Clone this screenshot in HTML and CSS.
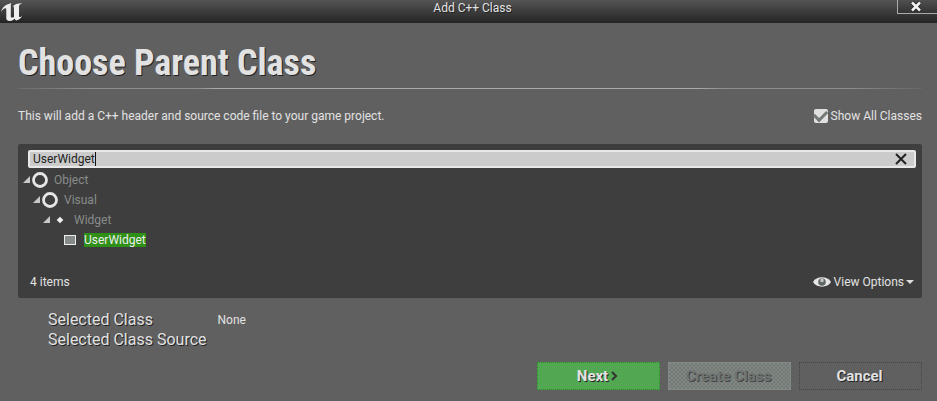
FILE: index.html
```html
<!DOCTYPE html>
<html lang="en">
<head>
<meta charset="utf-8">
<title>Add C++ Class</title>
<link rel="stylesheet" href="styles.css">
</head>
<body>
<div class="dialog">
  <header class="titlebar">
    <svg class="logo" viewBox="0 0 24 22" aria-hidden="true"><path d="M1 12C2.200 7.500 5 4.500 11.500 3C10.800 4 10.800 4.500 10.800 5.500V16C10.800 17.600 12 18 14 17V8.500C14 6.500 13.500 6 12.500 6.500C14.200 4.500 17.500 3.300 22.500 3C20.200 4 19 5 19 6.500V16.500C19.500 17.600 20.800 17 22.300 15.500C21 18.500 18.500 20 16 20.500L14.500 18.800C13 20.300 11.500 21 9.800 21C7.200 21 6 19.500 6.300 17.500V9.500C6.300 7.200 3.500 8 1 12Z"/></svg>
    <div class="title">Add C++ Class</div>
    <button class="close" aria-label="Close"><svg viewBox="0 0 12 11"><path class="x-edge" d="M2 1.500L10 9.500M10 1.500L2 9.500"/><path class="x-fill" d="M2 1.500L10 9.500M10 1.500L2 9.500"/></svg></button>
  </header>
  <main class="content">
    <h1>Choose Parent Class</h1>
    <div class="intro">
      <p>This will add a C++ header and source code file to your game project.</p>
      <label class="check"><input type="checkbox" checked>Show All Classes</label>
    </div>
    <section class="picker">
      <div class="search">
        <input type="text" value="UserWidget" aria-label="Search classes">
        <span class="caret"></span>
        <button class="clear" aria-label="Clear search"><svg viewBox="0 0 12 12"><path d="M1 1L11 11M11 1L1 11"/></svg></button>
      </div>
      <ul class="tree">
        <li><svg class="arrow" viewBox="0 0 8 8"><path d="M7 0V7H0Z"/></svg><svg class="icon" viewBox="0 0 16 16"><circle class="ring" cx="8" cy="8" r="6.500"/></svg><span>Object</span>
          <ul>
            <li><svg class="arrow" viewBox="0 0 8 8"><path d="M7 0V7H0Z"/></svg><svg class="icon" viewBox="0 0 16 16"><circle class="ring" cx="8" cy="8" r="6.500"/></svg><span>Visual</span>
              <ul>
                <li><svg class="arrow" viewBox="0 0 8 8"><path d="M7 0V7H0Z"/></svg><svg class="icon" viewBox="0 0 16 16"><path class="dot" d="M8 4.700L11.300 8L8 11.300L4.700 8Z"/></svg><span>Widget</span>
                  <ul>
                    <li><svg class="arrow" viewBox="0 0 8 8"></svg><svg class="icon" viewBox="0 0 16 16"><rect class="box" x="2.500" y="3.500" width="11" height="9"/></svg><span class="match">UserWidget</span></li>
                  </ul>
                </li>
              </ul>
            </li>
          </ul>
        </li>
      </ul>
      <div class="status">
        <span>4 items</span>
        <button class="view"><svg class="eye" viewBox="0 0 18 10"><path class="lid" d="M0 5C3-1.200 15-1.200 18 5C15 11.200 3 11.200 0 5Z"/><circle class="iris" cx="9" cy="5" r="3.800"/><path class="glint" d="M7.500 1.500H10.500V5H7.500Z"/></svg>View Options<svg class="down" viewBox="0 0 8 4"><path d="M0 0H8L4 4Z"/></svg></button>
      </div>
    </section>
    <dl class="selected">
      <dt>Selected Class</dt><dd>None</dd>
      <dt>Selected Class Source</dt><dd></dd>
    </dl>
    <footer class="actions">
      <button class="btn next">Next<svg viewBox="0 0 7 10"><path d="M1 1L5 5L1 9"/></svg></button>
      <button class="btn create" disabled>Create Class</button>
      <button class="btn cancel">Cancel</button>
    </footer>
  </main>
</div>
</body>
</html>
```
FILE: styles.css
```css
* { box-sizing: border-box; }
body {
  margin: 0;
  min-height: 100vh;
  background: #606060;
  color: #e2e2e2;
  font: 12px/20px Roboto, "Liberation Sans", sans-serif;
}
button, input { font: inherit; color: inherit; }
button { padding: 0; border: 0; background: none; }
svg { display: block; flex: none; }
p, h1, ul, dl, dd { margin: 0; padding: 0; }
.titlebar {
  display: grid;
  grid-template-columns: 1fr auto 1fr;
  align-items: start;
  height: 23px;
  background: linear-gradient(#555, #242424);
}
.logo { width: 24px; height: 22px; fill: #eee; }
.title { line-height: 16px; padding-left: 8px; text-shadow: 1px 1px #222; }
.close {
  justify-self: end;
  display: flex;
  justify-content: center;
  width: 40px;
  height: 14px;
  padding-right: 3px;
  border: solid #aaa;
  border-width: 0 0 1px 1px;
  background: linear-gradient(#505050, #333);
}
.close svg { width: 12px; height: 11px; margin-top: 1px; fill: none; }
.x-edge { stroke: #222; stroke-width: 4; }
.x-fill { stroke: #f4f4f4; stroke-width: 2.5; }
.content { padding: 18px 15px 0 18px; }
h1 {
  height: 48px;
  border-bottom: 1px solid;
  border-image: linear-gradient(90deg, #6a6c6b, #8a8e8c 8%, #8a8e8c 20%, #a8acaa 22%, #a8acaa 75%, #8a8e8c 78%, #8a8e8c 92%, #666) 1;
  font: bold 36px/44px "Roboto Condensed", Roboto, sans-serif;
  text-shadow: 1px 1px #222;
}
.intro { display: flex; justify-content: space-between; padding: 17px 0 18px; }
.check { display: flex; align-items: center; gap: 3px; }
.check input {
  appearance: none;
  display: grid;
  place-items: center;
  width: 14px;
  height: 14px;
  margin: 0;
  border-radius: 2px;
  background: #e0e0e0;
}
.check input:checked::before {
  content: "";
  width: 10px;
  height: 6px;
  margin-bottom: 3px;
  border: solid #717876;
  border-width: 0 0 3px 3px;
  rotate: -45deg;
}
.picker { padding: 6px; border-radius: 2px; background: #3e3e3e; }
.search {
  display: flex;
  align-items: center;
  height: 18px;
  margin-left: 4px;
  padding: 0 7px 0 3px;
  border: 2px solid #e8e8e8;
  border-radius: 2px;
  background: #cbcbcb;
  color: #222;
}
.search input {
  field-sizing: content;
  padding: 0;
  border: 0;
  outline: 0;
  background: none;
  line-height: 14px;
}
.caret { width: 1px; height: 14px; background: #111; }
.clear { margin-left: auto; }
.clear svg { width: 12px; height: 12px; fill: none; stroke: #222; stroke-width: 2; }
.tree { list-style: none; margin-top: 2px; color: #888c8a; margin-left: -1px; }
.tree ul { list-style: none; padding-left: 10px; }
.tree .arrow { float: left; width: 8px; height: 8px; margin: 6px 1px 0 0; fill: #c8c8c8; }
.tree .icon { float: left; width: 16px; height: 16px; margin: 2px 6px 0 0; }
.ring { fill: none; stroke: #e6e6e6; stroke-width: 2.8; }
.dot { fill: #f0f0f0; }
.box { fill: #858c89; stroke: #eee; }
.match { background: #2f9018; color: #eee; }
.status { display: flex; justify-content: space-between; padding: 22px 2px 0 6px; }
.view { display: flex; align-items: center; }
.eye { width: 18px; height: 10px; margin-right: 3px; }
.lid { fill: #e6e6e6; }
.iris { fill: #606866; }
.glint { fill: #c8c8c8; }
.down { width: 8px; height: 4px; margin-left: 2px; fill: #ddd; }
.selected {
  display: grid;
  grid-template-columns: auto 1fr;
  column-gap: 11px;
  padding: 12px 30px;
}
.selected dt { font-size: 16px; text-shadow: 1px 1px #222; }
.actions { display: flex; justify-content: flex-end; gap: 8px; }
.btn {
  display: flex;
  align-items: center;
  justify-content: center;
  width: 123px;
  height: 28px;
  padding-right: 2px;
  font-size: 15px;
  font-weight: bold;
  text-shadow: 1px 1px #222;
}
.next { border: 1px dotted #2f8a22; background: #52a852; }
.next svg { width: 7px; height: 10px; margin-left: 3px; fill: none; stroke: #333; stroke-width: 2; }
.create {
  border: 1px solid #828a87;
  background: #7b827f repeating-conic-gradient(#747976 0 25%, #808884 0 50%) 0 0 / 4px 4px;
  color: #707472;
  text-shadow: 1px 1px #444;
}
.cancel { border: 1px dotted #444; }
```
